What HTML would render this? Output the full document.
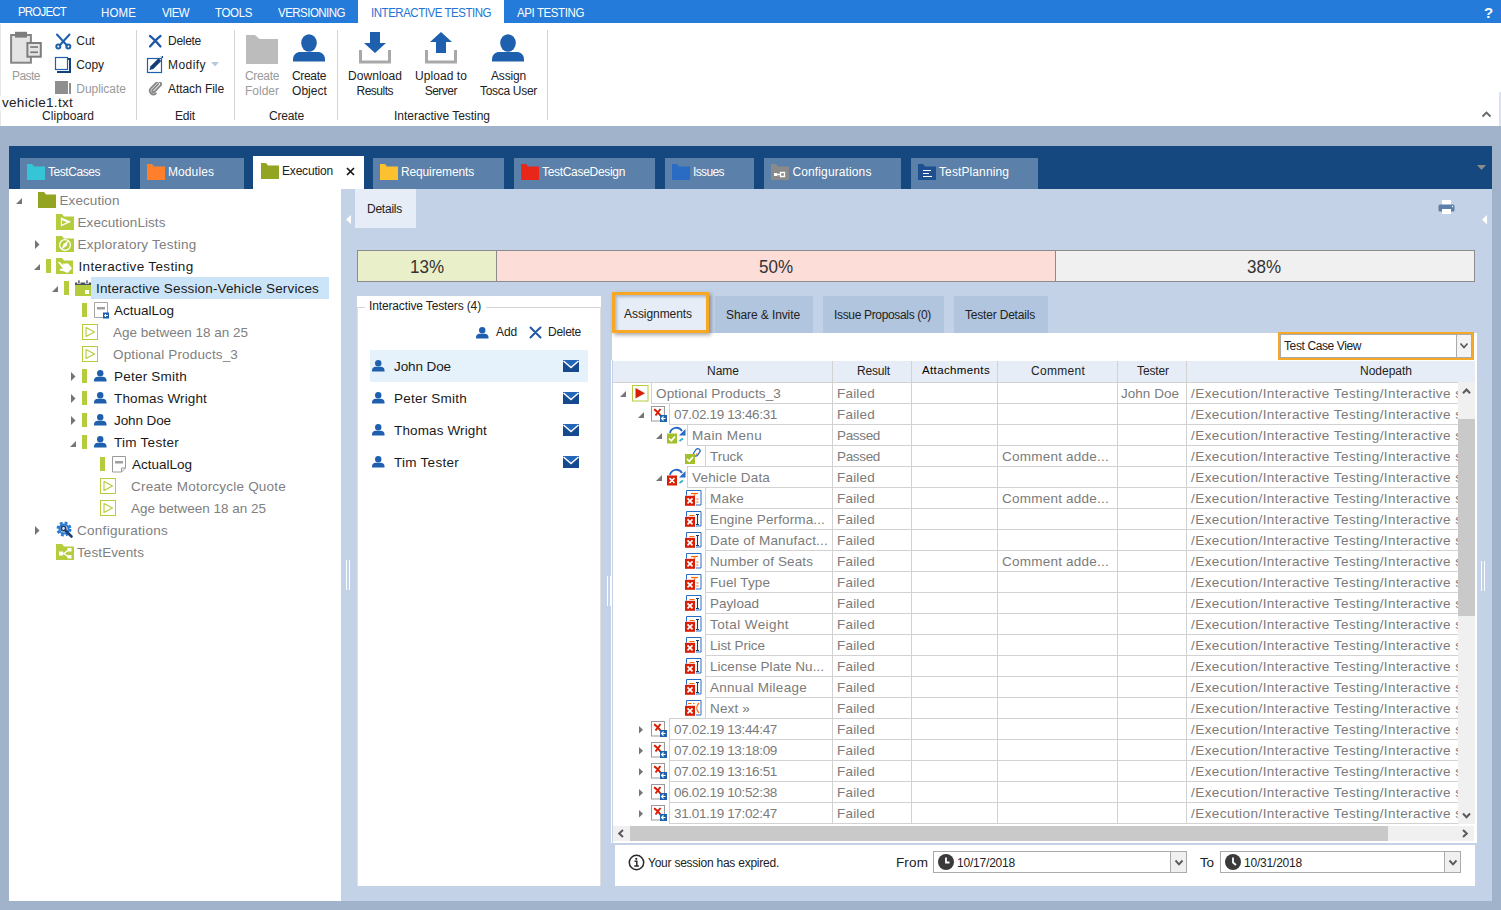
<!DOCTYPE html>
<html lang="en"><head><meta charset="utf-8"><title>Tosca Commander - Interactive Testing</title>
<style>
html,body{margin:0;padding:0}
body{width:1501px;height:910px;overflow:hidden;background:#a0b3cb;position:relative;font-family:"Liberation Sans",sans-serif;-webkit-font-smoothing:antialiased}
.r{position:absolute;display:block;box-sizing:border-box}
.t{position:absolute;white-space:nowrap;display:block}
</style></head>
<body>
<div class="r" style="left:0px;top:0px;width:1501px;height:23px;background:#257bd9;"></div>
<div class="r" style="left:358px;top:0px;width:146px;height:24px;background:#fff;"></div>
<span class="t" style="left:18px;top:4px;font-size:11.5px;line-height:16px;color:#fff;letter-spacing:-0.810px;transform:scaleY(1.1);">PROJECT</span>
<span class="t" style="left:101px;top:4.8px;font-size:11.5px;line-height:16px;color:#fff;letter-spacing:0.125px;transform:scaleY(1.1);">HOME</span>
<span class="t" style="left:162px;top:4.8px;font-size:11.5px;line-height:16px;color:#fff;letter-spacing:-0.598px;transform:scaleY(1.1);">VIEW</span>
<span class="t" style="left:215px;top:4.8px;font-size:11.5px;line-height:16px;color:#fff;letter-spacing:-0.355px;transform:scaleY(1.1);">TOOLS</span>
<span class="t" style="left:278px;top:4.8px;font-size:11.5px;line-height:16px;color:#fff;letter-spacing:-0.521px;transform:scaleY(1.1);">VERSIONING</span>
<span class="t" style="left:371px;top:4.8px;font-size:11.5px;line-height:16px;color:#2474d3;letter-spacing:-0.466px;transform:scaleY(1.1);">INTERACTIVE TESTING</span>
<span class="t" style="left:517px;top:4.8px;font-size:11.5px;line-height:16px;color:#fff;letter-spacing:-0.396px;transform:scaleY(1.1);">API TESTING</span>
<span class="t" style="left:1484px;top:4.5px;font-size:15px;line-height:16px;color:#fff;font-weight:700;">?</span>
<div class="r" style="left:0px;top:23px;width:1501px;height:103px;background:#fff;"></div>
<div class="r" style="left:0px;top:24px;width:1px;height:102px;background:#e6e6e6;"></div>
<div class="r" style="left:1499px;top:92px;width:2px;height:34px;background:#dde3ec;"></div>
<div class="r" style="left:136px;top:30px;width:1px;height:90px;background:#d4d4d4;"></div>
<div class="r" style="left:234px;top:30px;width:1px;height:90px;background:#d4d4d4;"></div>
<div class="r" style="left:337px;top:30px;width:1px;height:90px;background:#d4d4d4;"></div>
<div class="r" style="left:547px;top:30px;width:1px;height:90px;background:#d4d4d4;"></div>
<svg class="r" style="left:10px;top:31px;" width="33" height="34" viewBox="0 0 33 34"><rect x="1.100" y="4" width="19.800" height="27.700" fill="#e4e4e4" stroke="#858585" stroke-width="2"/>
<rect x="5" y=".8" width="12" height="5.800" fill="#7d7d7d"/>
<rect x="17.400" y="12" width="13.400" height="13.700" fill="#e4e4e4" stroke="#7d7d7d" stroke-width="2"/>
<rect x="20.200" y="15.200" width="7.800" height="1.700" fill="#7d7d7d"/><rect x="20.200" y="20.400" width="7.800" height="1.700" fill="#7d7d7d"/></svg>
<span class="t" style="left:12px;top:68px;font-size:12px;line-height:16px;color:#9a9a9a;letter-spacing:-0.537px;">Paste</span>
<svg class="r" style="left:54px;top:32px;" width="18" height="18" viewBox="0 0 18 18"><g fill="none" stroke="#1e5fae" stroke-width="2" stroke-linecap="round"><path d="M3 2.500l10 11M15.500 2.500L6 13"/><circle cx="4.300" cy="14.500" r="2"/><circle cx="14.300" cy="14.500" r="2"/></g></svg>
<span class="t" style="left:76.3px;top:33px;font-size:12px;line-height:16px;color:#222;letter-spacing:-0.058px;">Cut</span>
<svg class="r" style="left:54px;top:56px;" width="18" height="18" viewBox="0 0 18 18"><path d="M4 3h12v13h-13" fill="none" stroke="#123f7a" stroke-width="2"/><rect x="1.500" y="1.500" width="12" height="12" fill="#fff" stroke="#1e5fae" stroke-width="1.200"/></svg>
<span class="t" style="left:76.3px;top:57px;font-size:12px;line-height:16px;color:#222;letter-spacing:-0.128px;">Copy</span>
<svg class="r" style="left:54px;top:80px;" width="18" height="18" viewBox="0 0 18 18"><rect x="1" y="1" width="13" height="13" fill="#8f8f8f"/><rect x="15" y="3" width="2" height="11" fill="#8f8f8f"/></svg>
<span class="t" style="left:76.3px;top:81px;font-size:12px;line-height:16px;color:#9a9a9a;letter-spacing:-0.059px;">Duplicate</span>
<div class="r" style="left:0px;top:96px;width:55px;height:15px;background:#fbfbfb;"></div>
<span class="t" style="left:2px;top:95px;font-size:13.5px;line-height:16px;color:#222;letter-spacing:0.289px;">vehicle1.txt</span>
<span class="t" style="left:42px;top:108px;font-size:12px;line-height:16px;color:#222;letter-spacing:0.071px;">Clipboard</span>
<svg class="r" style="left:147px;top:33px;" width="16" height="16" viewBox="0 0 16 16"><path d="M3 3C6.500 5.500 10 9.500 13.500 13.500M13.500 3C10 5.500 6.500 9.500 3 13.500" fill="none" stroke="#1e57a4" stroke-width="2.200" stroke-linecap="round"/></svg>
<span class="t" style="left:168px;top:33px;font-size:12px;line-height:16px;color:#222;letter-spacing:-0.281px;">Delete</span>
<svg class="r" style="left:146px;top:55px;" width="18" height="19" viewBox="0 0 18 19"><rect x="1.500" y="3.500" width="14" height="14" fill="#fff" stroke="#1e5fae" stroke-width="1.200"/><path d="M3.500 15l1-3.800 8-8 2.800 2.800-8 8z" fill="#123f7a"/><path d="M15 1.500l1.500 1.500M16.500 1v2" stroke="#123f7a" stroke-width="1"/></svg>
<span class="t" style="left:168px;top:57px;font-size:12px;line-height:16px;color:#222;letter-spacing:0.443px;">Modify</span>
<svg class="r" style="left:211px;top:62px;" width="8" height="5" viewBox="0 0 8 5"><path d="M0 0h8l-4 4.500z" fill="#b7c9e0"/></svg>
<svg class="r" style="left:148px;top:82px;" width="14" height="14" viewBox="0 0 17 17"><path d="M12.500 4.500l-7 7a1.600 1.600 0 0 0 2.300 2.300l7-7a3 3 0 0 0-4.300-4.300l-7.200 7.200a4.400 4.400 0 0 0 6.200 6.200" fill="none" stroke="#888" stroke-width="2.300" stroke-linecap="round" transform="translate(0,-2)"/></svg>
<span class="t" style="left:168px;top:81px;font-size:12px;line-height:16px;color:#222;letter-spacing:-0.063px;">Attach File</span>
<span class="t" style="left:175px;top:108px;font-size:12px;line-height:16px;color:#222;letter-spacing:-0.169px;">Edit</span>
<svg class="r" style="left:246px;top:35px;" width="33" height="29" viewBox="0 0 33 29"><path d="M0 0h9l4.500 4h18.500v25h-32z" fill="#bcbcbc"/></svg>
<span class="t" style="left:245px;top:68px;font-size:12px;line-height:16px;color:#9a9a9a;letter-spacing:-0.336px;">Create</span>
<span class="t" style="left:245px;top:83px;font-size:12px;line-height:16px;color:#9a9a9a;letter-spacing:-0.002px;">Folder</span>
<svg class="r" style="left:293px;top:34px;" width="32" height="28" viewBox="0 0 32 28"><ellipse cx="16" cy="9" rx="7.800" ry="8.800" fill="#1e5fae"/><path d="M0 27.500v-2c0-5 3.500-7.500 7.500-7.500h17c4 0 7.500 2.500 7.500 7.500v2z" fill="#1e5fae"/></svg>
<span class="t" style="left:292px;top:68px;font-size:12px;line-height:16px;color:#222;letter-spacing:-0.336px;">Create</span>
<span class="t" style="left:292px;top:83px;font-size:12px;line-height:16px;color:#222;letter-spacing:0.053px;">Object</span>
<span class="t" style="left:269px;top:108px;font-size:12px;line-height:16px;color:#222;letter-spacing:-0.170px;">Create</span>
<svg class="r" style="left:358px;top:32px;" width="34" height="32" viewBox="0 0 34 32"><path d="M12 0h10v11h6l-11 10-11-10h6z" fill="#1e5fae"/><path d="M2.500 18v12h29v-12" fill="none" stroke="#a9a9a9" stroke-width="3"/></svg>
<span class="t" style="left:348px;top:68px;font-size:12px;line-height:16px;color:#222;letter-spacing:0.079px;">Download</span>
<span class="t" style="left:356.5px;top:83px;font-size:12px;line-height:16px;color:#222;letter-spacing:-0.502px;">Results</span>
<svg class="r" style="left:424px;top:32px;" width="34" height="32" viewBox="0 0 34 32"><path d="M12 21h10v-11h6l-11-10-11 10h6z" fill="#1e5fae"/><path d="M2.500 18v12h29v-12" fill="none" stroke="#a9a9a9" stroke-width="3"/></svg>
<span class="t" style="left:415px;top:68px;font-size:12px;line-height:16px;color:#222;letter-spacing:0.070px;">Upload to</span>
<span class="t" style="left:424.7px;top:83px;font-size:12px;line-height:16px;color:#222;letter-spacing:-0.507px;">Server</span>
<svg class="r" style="left:492px;top:34px;" width="32" height="28" viewBox="0 0 32 28"><ellipse cx="16" cy="9" rx="7.800" ry="8.800" fill="#1e5fae"/><path d="M0 27.500v-2c0-5 3.500-7.500 7.500-7.500h17c4 0 7.500 2.500 7.500 7.500v2z" fill="#1e5fae"/></svg>
<span class="t" style="left:491px;top:68px;font-size:12px;line-height:16px;color:#222;letter-spacing:-0.170px;">Assign</span>
<span class="t" style="left:480px;top:83px;font-size:12px;line-height:16px;color:#222;letter-spacing:-0.302px;">Tosca User</span>
<span class="t" style="left:394px;top:108px;font-size:12px;line-height:16px;color:#222;letter-spacing:-0.026px;">Interactive Testing</span>
<svg class="r" style="left:1481px;top:110px;" width="11" height="8" viewBox="0 0 11 8"><path d="M1.500 6.500l4-4 4 4" fill="none" stroke="#666" stroke-width="1.800"/></svg>
<div class="r" style="left:9px;top:146px;width:1483px;height:43px;background:#14487f;"></div>
<div class="r" style="left:20px;top:158px;width:110px;height:31px;background:#5b80a9;"></div>
<span class="t" style="left:48px;top:164px;font-size:12px;line-height:16px;color:#fff;letter-spacing:-0.447px;">TestCases</span>
<svg class="r" style="left:27px;top:164px;" width="18" height="16" viewBox="0 0 18 16"><path d="M0 0h5l2 2.500h11v13.500h-18z" fill="#36c5d6"/></svg>
<div class="r" style="left:140px;top:158px;width:104px;height:31px;background:#5b80a9;"></div>
<span class="t" style="left:168px;top:164px;font-size:12px;line-height:16px;color:#fff;letter-spacing:0.092px;">Modules</span>
<svg class="r" style="left:147px;top:164px;" width="18" height="16" viewBox="0 0 18 16"><path d="M0 0h5l2 2.500h11v13.500h-18z" fill="#ff7f2a"/></svg>
<div class="r" style="left:253px;top:156px;width:111px;height:33px;background:#fff;"></div>
<svg class="r" style="left:261px;top:163px;" width="18" height="16" viewBox="0 0 18 16"><path d="M0 0h5l2 2.500h11v13.500h-18z" fill="#93a322"/></svg>
<span class="t" style="left:282px;top:163px;font-size:12px;line-height:16px;color:#222;letter-spacing:-0.189px;">Execution</span>
<svg class="r" style="left:346px;top:167px;" width="9" height="9" viewBox="0 0 9 9"><path d="M1 1l7 7M8 1l-7 7" stroke="#111" stroke-width="1.600" fill="none"/></svg>
<div class="r" style="left:373px;top:158px;width:131px;height:31px;background:#5b80a9;"></div>
<span class="t" style="left:401px;top:164px;font-size:12px;line-height:16px;color:#fff;letter-spacing:-0.142px;">Requirements</span>
<svg class="r" style="left:380px;top:164px;" width="18" height="16" viewBox="0 0 18 16"><path d="M0 0h5l2 2.500h11v13.500h-18z" fill="#fdc02f"/></svg>
<div class="r" style="left:514px;top:158px;width:141px;height:31px;background:#5b80a9;"></div>
<span class="t" style="left:542px;top:164px;font-size:12px;line-height:16px;color:#fff;letter-spacing:-0.312px;">TestCaseDesign</span>
<svg class="r" style="left:521px;top:164px;" width="18" height="16" viewBox="0 0 18 16"><path d="M0 0h5l2 2.500h11v13.500h-18z" fill="#e8261a"/></svg>
<div class="r" style="left:665px;top:158px;width:89px;height:31px;background:#5b80a9;"></div>
<span class="t" style="left:693px;top:164px;font-size:12px;line-height:16px;color:#fff;letter-spacing:-0.614px;">Issues</span>
<svg class="r" style="left:672px;top:164px;" width="18" height="16" viewBox="0 0 18 16"><path d="M0 0h5l2 2.500h11v13.500h-18z" fill="#2a6cc4"/></svg>
<div class="r" style="left:764px;top:158px;width:137px;height:31px;background:#5b80a9;"></div>
<span class="t" style="left:792.5px;top:164px;font-size:12px;line-height:16px;color:#fff;letter-spacing:0.116px;">Configurations</span>
<svg class="r" style="left:771px;top:164px;" width="18" height="16" viewBox="0 0 18 16"><path d="M0 0h5l2 2.500h11v13.500h-18z" fill="#8a8a8a"/><path d="M4 10.500h5M9.500 8.500h4v4h-4z" fill="none" stroke="#fff" stroke-width="1.300"/><rect x="3" y="9" width="3" height="3" fill="#fff"/></svg>
<div class="r" style="left:911px;top:158px;width:127px;height:31px;background:#5b80a9;"></div>
<span class="t" style="left:939px;top:164px;font-size:12px;line-height:16px;color:#fff;letter-spacing:0.107px;">TestPlanning</span>
<svg class="r" style="left:918px;top:164px;" width="18" height="16" viewBox="0 0 18 16"><path d="M0 0h5l2 2.500h11v13.500h-18z" fill="#1d4f91"/><path d="M5 6.500h8M5 9.500h6M5 12.500h9" stroke="#fff" stroke-width="1"/></svg>
<svg class="r" style="left:1477px;top:165px;" width="10" height="6" viewBox="0 0 10 6"><path d="M0 0h9l-4.500 5z" fill="#8c8c8c"/></svg>
<div class="r" style="left:9px;top:189px;width:332px;height:712px;background:#fff;"></div>
<svg class="r" style="left:16px;top:198px;" width="6" height="6" viewBox="0 0 6 6"><path d="M6 0v6h-6z" fill="#757575"/></svg>
<svg class="r" style="left:38px;top:192px;" width="18" height="16" viewBox="0 0 18 16"><path d="M0 0h6l2 2.500h10v13.500h-18z" fill="#93a322"/></svg>
<span class="t" style="left:59.5px;top:192.8px;font-size:13.5px;line-height:16px;color:#808080;letter-spacing:0.079px;">Execution</span>
<svg class="r" style="left:56px;top:214px;" width="18" height="16" viewBox="0 0 18 16"><path d="M0 0h6l2 2.500h10v13.500h-18z" fill="#b5cc3d"/><path d="M4.800 3.300l10.400 4.500-10.400 4.700z" fill="#fff"/><path d="M6 6.300l5 2-5 2.200z" fill="#b5cc3d"/></svg>
<span class="t" style="left:77.5px;top:214.8px;font-size:13.5px;line-height:16px;color:#808080;letter-spacing:0.068px;">ExecutionLists</span>
<svg class="r" style="left:35px;top:240px;" width="5" height="9" viewBox="0 0 5 9"><path d="M0 0l4.500 4.500-4.500 4.500z" fill="#757575"/></svg>
<svg class="r" style="left:56px;top:236px;" width="18" height="16" viewBox="0 0 18 16"><path d="M0 0h6l2 2.500h10v13.500h-18z" fill="#b5cc3d"/><circle cx="9" cy="9" r="5.400" fill="none" stroke="#fff" stroke-width="1.300"/><path d="M12.500 4.500l-2 5.500-5 3.500 2-5.500z" fill="#fff"/></svg>
<span class="t" style="left:77.5px;top:236.8px;font-size:13.5px;line-height:16px;color:#808080;letter-spacing:0.234px;">Exploratory Testing</span>
<svg class="r" style="left:34px;top:264px;" width="6" height="6" viewBox="0 0 6 6"><path d="M6 0v6h-6z" fill="#757575"/></svg>
<div class="r" style="left:46px;top:259px;width:5px;height:14px;background:#b5cc3d;"></div>
<svg class="r" style="left:56px;top:258px;" width="18" height="16" viewBox="0 0 18 16"><path d="M0 0h6l2 2.500h9v13.500h-17z" fill="#b5cc3d"/><path d="M1.900 4.200L3.400 3.800L7.200 7L7.600 5L9 6L9.800 4.900L11 6L11.800 5L16 10.300L11.700 14.900L6.900 13L3.700 12.500L4 11.100L6.900 10.600Z" fill="#fff"/></svg>
<span class="t" style="left:78.5px;top:258.8px;font-size:13.5px;line-height:16px;color:#1a1a1a;letter-spacing:0.339px;">Interactive Testing</span>
<svg class="r" style="left:52px;top:285.5px;" width="6" height="6" viewBox="0 0 6 6"><path d="M6 0v6h-6z" fill="#757575"/></svg>
<div class="r" style="left:64px;top:281px;width:5px;height:14px;background:#b5cc3d;"></div>
<svg class="r" style="left:75px;top:280px;" width="16" height="16" viewBox="0 0 16 16"><rect x="0" y="5" width="16" height="11" fill="#b5cc3d"/><rect x="0" y="2.500" width="16" height="2.500" fill="#4a525e"/><rect x="2" y="2.300" width="3.700" height="1.400" fill="#fff"/><rect x="10" y="2.300" width="4" height="1.400" fill="#fff"/><rect x="3.200" y=".3" width="1.400" height="2.900" fill="#4a525e"/><rect x="11.300" y=".3" width="1.400" height="2.900" fill="#4a525e"/><rect x="10" y="10" width="4" height="4" fill="#fff"/></svg>
<div class="r" style="left:91px;top:277px;width:238px;height:22px;background:#cce4f7;"></div>
<span class="t" style="left:96px;top:280.8px;font-size:13.5px;line-height:16px;color:#1a1a1a;letter-spacing:0.150px;">Interactive Session-Vehicle Services</span>
<div class="r" style="left:82px;top:303px;width:5px;height:14px;background:#b5cc3d;"></div>
<svg class="r" style="left:93px;top:302px;" width="16" height="17" viewBox="0 0 16 17"><path d="M1.500 .5h13v15h-13z" fill="#fff" stroke="#a5a5a5" stroke-width="1"/><rect x="4" y="5" width="8" height="2.500" fill="#a0a0a0"/><rect x="10" y="10.500" width="6" height="6" fill="#1e5fae"/><path d="M11.500 13.500h3.500M13 12l-1.500 1.500 1.500 1.500" stroke="#fff" stroke-width="1" fill="none"/></svg>
<span class="t" style="left:114px;top:302.8px;font-size:13.5px;line-height:16px;color:#1a1a1a;letter-spacing:-0.005px;">ActualLog</span>
<svg class="r" style="left:82px;top:324px;" width="16" height="16" viewBox="0 0 16 16"><rect x=".5" y=".5" width="15" height="15" fill="#fff" stroke="#b5cc3d" stroke-width="1"/><path d="M4 3.500l8.500 4.500-8.500 4.500z" fill="none" stroke="#b5cc3d" stroke-width="1.100" stroke-linejoin="round"/></svg>
<span class="t" style="left:113px;top:324.8px;font-size:13.5px;line-height:16px;color:#808080;letter-spacing:-0.006px;">Age between 18 an 25</span>
<svg class="r" style="left:82px;top:346px;" width="16" height="16" viewBox="0 0 16 16"><rect x=".5" y=".5" width="15" height="15" fill="#fff" stroke="#b5cc3d" stroke-width="1"/><path d="M4 3.500l8.500 4.500-8.500 4.500z" fill="none" stroke="#b5cc3d" stroke-width="1.100" stroke-linejoin="round"/></svg>
<span class="t" style="left:113px;top:346.8px;font-size:13.5px;line-height:16px;color:#808080;letter-spacing:0.141px;">Optional Products_3</span>
<svg class="r" style="left:71px;top:372px;" width="5" height="9" viewBox="0 0 5 9"><path d="M0 0l4.500 4.500-4.500 4.500z" fill="#757575"/></svg>
<div class="r" style="left:82px;top:369px;width:5px;height:14px;background:#b5cc3d;"></div>
<svg class="r" style="left:94px;top:370px;" width="13" height="12" viewBox="0 0 13 12"><circle cx="6.250" cy="3.300" r="3.200" fill="#1e5fae"/><path d="M0 11.500v-1.200c0-2.300 1.700-3.600 3.700-3.600h5.100c2 0 3.700 1.300 3.700 3.600v1.200z" fill="#1e5fae"/></svg>
<span class="t" style="left:114px;top:368.8px;font-size:13.5px;line-height:16px;color:#1a1a1a;letter-spacing:0.225px;">Peter Smith</span>
<svg class="r" style="left:71px;top:394px;" width="5" height="9" viewBox="0 0 5 9"><path d="M0 0l4.500 4.500-4.500 4.500z" fill="#757575"/></svg>
<div class="r" style="left:82px;top:391px;width:5px;height:14px;background:#b5cc3d;"></div>
<svg class="r" style="left:94px;top:392px;" width="13" height="12" viewBox="0 0 13 12"><circle cx="6.250" cy="3.300" r="3.200" fill="#1e5fae"/><path d="M0 11.500v-1.200c0-2.300 1.700-3.600 3.700-3.600h5.100c2 0 3.700 1.300 3.700 3.600v1.200z" fill="#1e5fae"/></svg>
<span class="t" style="left:114px;top:390.8px;font-size:13.5px;line-height:16px;color:#1a1a1a;letter-spacing:0.133px;">Thomas Wright</span>
<svg class="r" style="left:71px;top:416px;" width="5" height="9" viewBox="0 0 5 9"><path d="M0 0l4.500 4.500-4.500 4.500z" fill="#757575"/></svg>
<div class="r" style="left:82px;top:413px;width:5px;height:14px;background:#b5cc3d;"></div>
<svg class="r" style="left:94px;top:414px;" width="13" height="12" viewBox="0 0 13 12"><circle cx="6.250" cy="3.300" r="3.200" fill="#1e5fae"/><path d="M0 11.500v-1.200c0-2.300 1.700-3.600 3.700-3.600h5.100c2 0 3.700 1.300 3.700 3.600v1.200z" fill="#1e5fae"/></svg>
<span class="t" style="left:114px;top:412.8px;font-size:13.5px;line-height:16px;color:#1a1a1a;letter-spacing:-0.099px;">John Doe</span>
<svg class="r" style="left:70px;top:441px;" width="6" height="6" viewBox="0 0 6 6"><path d="M6 0v6h-6z" fill="#757575"/></svg>
<div class="r" style="left:82px;top:435px;width:5px;height:14px;background:#b5cc3d;"></div>
<svg class="r" style="left:94px;top:436px;" width="13" height="12" viewBox="0 0 13 12"><circle cx="6.250" cy="3.300" r="3.200" fill="#1e5fae"/><path d="M0 11.500v-1.200c0-2.300 1.700-3.600 3.700-3.600h5.100c2 0 3.700 1.300 3.700 3.600v1.200z" fill="#1e5fae"/></svg>
<span class="t" style="left:114px;top:434.8px;font-size:13.5px;line-height:16px;color:#1a1a1a;letter-spacing:0.274px;">Tim Tester</span>
<div class="r" style="left:100px;top:457px;width:5px;height:14px;background:#b5cc3d;"></div>
<svg class="r" style="left:111px;top:456px;" width="16" height="17" viewBox="0 0 16 17"><path d="M1.500 .5h13v11.500l-4 4h-9z" fill="#fff" stroke="#9a9a9a" stroke-width="1"/><rect x="4" y="5" width="8" height="2.500" fill="#a0a0a0"/><path d="M10.500 16v-4h4" fill="none" stroke="#9a9a9a"/></svg>
<span class="t" style="left:132px;top:456.8px;font-size:13.5px;line-height:16px;color:#1a1a1a;letter-spacing:-0.005px;">ActualLog</span>
<svg class="r" style="left:100px;top:478px;" width="16" height="16" viewBox="0 0 16 16"><rect x=".5" y=".5" width="15" height="15" fill="#fff" stroke="#b5cc3d" stroke-width="1"/><path d="M4 3.500l8.500 4.500-8.500 4.500z" fill="none" stroke="#b5cc3d" stroke-width="1.100" stroke-linejoin="round"/></svg>
<span class="t" style="left:131px;top:478.8px;font-size:13.5px;line-height:16px;color:#808080;letter-spacing:0.215px;">Create Motorcycle Quote</span>
<svg class="r" style="left:100px;top:500px;" width="16" height="16" viewBox="0 0 16 16"><rect x=".5" y=".5" width="15" height="15" fill="#fff" stroke="#b5cc3d" stroke-width="1"/><path d="M4 3.500l8.500 4.500-8.500 4.500z" fill="none" stroke="#b5cc3d" stroke-width="1.100" stroke-linejoin="round"/></svg>
<span class="t" style="left:131px;top:500.8px;font-size:13.5px;line-height:16px;color:#808080;letter-spacing:-0.006px;">Age between 18 an 25</span>
<svg class="r" style="left:35px;top:526px;" width="5" height="9" viewBox="0 0 5 9"><path d="M0 0l4.500 4.500-4.500 4.500z" fill="#757575"/></svg>
<svg class="r" style="left:56px;top:521px;" width="18" height="18" viewBox="0 0 18 18"><circle cx="8" cy="8" r="6" fill="none" stroke="#2a7bd1" stroke-width="3" stroke-dasharray="2.700 2"/><circle cx="8" cy="8" r="4.600" fill="#d9e8f8" stroke="#2a7bd1" stroke-width="2"/><circle cx="7.500" cy="7.500" r="2.200" fill="none" stroke="#1c3f73" stroke-width="1.600"/><path d="M9.500 9.500l6 6" stroke="#1c3f73" stroke-width="2.600" stroke-linecap="round"/></svg>
<span class="t" style="left:77px;top:522.8px;font-size:13.5px;line-height:16px;color:#808080;letter-spacing:0.282px;">Configurations</span>
<svg class="r" style="left:56px;top:544px;" width="18" height="16" viewBox="0 0 18 16"><path d="M0 0h6l2 2.500h10v13.500h-18z" fill="#b5cc3d"/><path d="M5 9.500h3M8 9.500l4.500-3.500M8 9.500l4.500 3.500" stroke="#fff" stroke-width="1.300" fill="none"/><rect x="3" y="7.500" width="4" height="4" fill="#fff"/><rect x="11.500" y="4" width="4" height="3.500" fill="#fff"/><rect x="11.500" y="11" width="4" height="3.500" fill="#fff"/></svg>
<span class="t" style="left:77px;top:544.8px;font-size:13.5px;line-height:16px;color:#808080;letter-spacing:0.097px;">TestEvents</span>
<div class="r" style="left:341px;top:189px;width:1151px;height:712px;background:#c3d2e6;"></div>
<div class="r" style="left:355px;top:189px;width:61px;height:39px;background:#e6edf6;"></div>
<span class="t" style="left:367px;top:201px;font-size:12px;line-height:16px;color:#222;letter-spacing:-0.240px;">Details</span>
<svg class="r" style="left:345.5px;top:214.5px;" width="5" height="9" viewBox="0 0 5 9"><path d="M5 0v9l-5-4.500z" fill="#fff"/></svg>
<svg class="r" style="left:1482px;top:214.5px;" width="5" height="9.5" viewBox="0 0 5 9.5"><path d="M5 0v9.500l-5-4.750z" fill="#fff"/></svg>
<svg class="r" style="left:1438px;top:200px;" width="18" height="15" viewBox="0 0 18 15"><rect x="4" y="0" width="9" height="5" fill="#fff"/><rect x="0.500" y="4.500" width="16" height="7" rx="1.500" fill="#5b80a9"/><rect x="4" y="9" width="9" height="5" fill="#fff"/><circle cx="14.500" cy="6.500" r=".7" fill="#fff"/></svg>
<div class="r" style="left:357px;top:250px;width:1118px;height:32px;background:#f0f0f0;border:1px solid #8c8c8c;"></div>
<div class="r" style="left:358px;top:251px;width:138px;height:30px;background:#e9f0c9;"></div>
<div class="r" style="left:496px;top:251px;width:560px;height:30px;background:#fdddd8;border-left:1px solid #8c8c8c;border-right:1px solid #8c8c8c;"></div>
<span class="t" style="left:410px;top:257px;font-size:17px;line-height:20px;color:#333;letter-spacing:-0.009px;transform:scaleY(1.13);transform-origin:50% 50%;">13%</span>
<span class="t" style="left:759px;top:257px;font-size:17px;line-height:20px;color:#333;letter-spacing:-0.009px;transform:scaleY(1.13);transform-origin:50% 50%;">50%</span>
<span class="t" style="left:1247px;top:257px;font-size:17px;line-height:20px;color:#333;letter-spacing:-0.009px;transform:scaleY(1.13);transform-origin:50% 50%;">38%</span>
<div class="r" style="left:357px;top:296px;width:244px;height:590px;background:#fff;"></div>
<div class="r" style="left:357px;top:307px;width:244px;height:1px;background:#d4d4d4;"></div>
<div class="r" style="left:357px;top:307px;width:1px;height:579px;background:#e0e0e0;"></div>
<div class="r" style="left:600px;top:307px;width:1px;height:579px;background:#e0e0e0;"></div>
<div class="r" style="left:365px;top:300px;width:121px;height:12px;background:#fff;"></div>
<span class="t" style="left:369px;top:298px;font-size:12px;line-height:16px;color:#222;letter-spacing:-0.137px;">Interactive Testers (4)</span>
<svg class="r" style="left:476px;top:326.5px;" width="13" height="12" viewBox="0 0 13 12"><circle cx="6.250" cy="3.300" r="3.200" fill="#1e5fae"/><path d="M0 11.500v-1.200c0-2.300 1.700-3.600 3.700-3.600h5.100c2 0 3.700 1.300 3.700 3.600v1.200z" fill="#1e5fae"/></svg>
<span class="t" style="left:496px;top:324px;font-size:12px;line-height:16px;color:#222;letter-spacing:-0.117px;">Add</span>
<svg class="r" style="left:529px;top:326px;" width="13" height="13" viewBox="0 0 13 13"><path d="M1.500 1.500C5 5 8 8 11.500 11.500M11.500 1.500C8 4.500 5 8 1.500 11.500" fill="none" stroke="#1e57a4" stroke-width="2" stroke-linecap="round"/></svg>
<span class="t" style="left:548px;top:324px;font-size:12px;line-height:16px;color:#222;letter-spacing:-0.281px;">Delete</span>
<div class="r" style="left:370px;top:350px;width:218px;height:32px;background:#e5f1fb;"></div>
<svg class="r" style="left:372px;top:360px;" width="13" height="12" viewBox="0 0 13 12"><circle cx="6.250" cy="3.300" r="3.200" fill="#1e5fae"/><path d="M0 11.500v-1.200c0-2.300 1.700-3.600 3.700-3.600h5.100c2 0 3.700 1.300 3.700 3.600v1.200z" fill="#1e5fae"/></svg>
<span class="t" style="left:394px;top:358.5px;font-size:13.5px;line-height:16px;color:#1a1a1a;letter-spacing:-0.099px;">John Doe</span>
<svg class="r" style="left:563px;top:360px;" width="16" height="12" viewBox="0 0 16 12"><rect x="0" y="0" width="16" height="12" fill="#174a8c"/><path d="M0 0h16l-8 7z" fill="#2466b8"/><path d="M.5 1l7.500 6.500 7.500-6.500" fill="none" stroke="#fff" stroke-width="1.500"/></svg>
<svg class="r" style="left:372px;top:392px;" width="13" height="12" viewBox="0 0 13 12"><circle cx="6.250" cy="3.300" r="3.200" fill="#1e5fae"/><path d="M0 11.500v-1.200c0-2.300 1.700-3.600 3.700-3.600h5.100c2 0 3.700 1.300 3.700 3.600v1.200z" fill="#1e5fae"/></svg>
<span class="t" style="left:394px;top:390.5px;font-size:13.5px;line-height:16px;color:#1a1a1a;letter-spacing:0.225px;">Peter Smith</span>
<svg class="r" style="left:563px;top:392px;" width="16" height="12" viewBox="0 0 16 12"><rect x="0" y="0" width="16" height="12" fill="#174a8c"/><path d="M0 0h16l-8 7z" fill="#2466b8"/><path d="M.5 1l7.500 6.500 7.500-6.500" fill="none" stroke="#fff" stroke-width="1.500"/></svg>
<svg class="r" style="left:372px;top:424px;" width="13" height="12" viewBox="0 0 13 12"><circle cx="6.250" cy="3.300" r="3.200" fill="#1e5fae"/><path d="M0 11.500v-1.200c0-2.300 1.700-3.600 3.700-3.600h5.100c2 0 3.700 1.300 3.700 3.600v1.200z" fill="#1e5fae"/></svg>
<span class="t" style="left:394px;top:422.5px;font-size:13.5px;line-height:16px;color:#1a1a1a;letter-spacing:0.133px;">Thomas Wright</span>
<svg class="r" style="left:563px;top:424px;" width="16" height="12" viewBox="0 0 16 12"><rect x="0" y="0" width="16" height="12" fill="#174a8c"/><path d="M0 0h16l-8 7z" fill="#2466b8"/><path d="M.5 1l7.500 6.500 7.500-6.500" fill="none" stroke="#fff" stroke-width="1.500"/></svg>
<svg class="r" style="left:372px;top:456px;" width="13" height="12" viewBox="0 0 13 12"><circle cx="6.250" cy="3.300" r="3.200" fill="#1e5fae"/><path d="M0 11.500v-1.200c0-2.300 1.700-3.600 3.700-3.600h5.100c2 0 3.700 1.300 3.700 3.600v1.200z" fill="#1e5fae"/></svg>
<span class="t" style="left:394px;top:454.5px;font-size:13.5px;line-height:16px;color:#1a1a1a;letter-spacing:0.274px;">Tim Tester</span>
<svg class="r" style="left:563px;top:456px;" width="16" height="12" viewBox="0 0 16 12"><rect x="0" y="0" width="16" height="12" fill="#174a8c"/><path d="M0 0h16l-8 7z" fill="#2466b8"/><path d="M.5 1l7.500 6.500 7.500-6.500" fill="none" stroke="#fff" stroke-width="1.500"/></svg>
<div class="r" style="left:346px;top:560px;width:1px;height:30px;background:#fff;"></div>
<div class="r" style="left:349px;top:560px;width:1px;height:30px;background:#fff;"></div>
<div class="r" style="left:607px;top:576px;width:1px;height:30px;background:#fff;"></div>
<div class="r" style="left:610px;top:576px;width:1px;height:30px;background:#fff;"></div>
<div class="r" style="left:1481px;top:561px;width:1px;height:30px;background:#fff;"></div>
<div class="r" style="left:1484px;top:561px;width:1px;height:30px;background:#fff;"></div>
<div class="r" style="left:715px;top:296px;width:98px;height:37px;background:#b1c5df;"></div>
<span class="t" style="left:726px;top:307px;font-size:12px;line-height:16px;color:#222;letter-spacing:-0.098px;">Share &amp; Invite</span>
<div class="r" style="left:823px;top:296px;width:121px;height:37px;background:#b1c5df;"></div>
<span class="t" style="left:834px;top:307px;font-size:12px;line-height:16px;color:#222;letter-spacing:-0.336px;">Issue Proposals (0)</span>
<div class="r" style="left:954px;top:296px;width:94px;height:37px;background:#b1c5df;"></div>
<span class="t" style="left:965px;top:307px;font-size:12px;line-height:16px;color:#222;letter-spacing:-0.192px;">Tester Details</span>
<div class="r" style="left:612px;top:333px;width:865px;height:510px;background:#fff;"></div>
<div class="r" style="left:615px;top:845px;width:860px;height:41px;background:#fff;"></div>
<div class="r" style="left:1278px;top:332px;width:196px;height:28px;background:#fff;border:2px solid #f5a828;"></div>
<div class="r" style="left:1280px;top:334px;width:192px;height:24px;background:#fff;border:1px solid #ababab;"></div>
<div class="r" style="left:1456px;top:335px;width:1px;height:22px;background:#ababab;"></div>
<div class="r" style="left:1457px;top:335px;width:14px;height:22px;background:#f3f3f3;"></div>
<svg class="r" style="left:1459px;top:342px;" width="10" height="8" viewBox="0 0 10 8"><path d="M1.500 1.500l3.500 4 3.500-4" fill="none" stroke="#555" stroke-width="1.600"/></svg>
<span class="t" style="left:1284px;top:338px;font-size:12px;line-height:16px;color:#222;letter-spacing:-0.392px;">Test Case View</span>
<div class="r" style="left:613px;top:361px;width:845px;height:21px;background:#e6edf6;"></div>
<div class="r" style="left:1458px;top:361px;width:17px;height:21px;background:#e6edf6;"></div>
<div class="r" style="left:611px;top:360px;width:1px;height:483px;background:#fff;"></div>
<div class="r" style="left:612px;top:360px;width:1px;height:483px;background:#c3d2e6;"></div>
<div class="r" style="left:832px;top:361px;width:1px;height:463px;background:#d2d2d2;"></div>
<div class="r" style="left:911px;top:361px;width:1px;height:463px;background:#d2d2d2;"></div>
<div class="r" style="left:997px;top:361px;width:1px;height:463px;background:#d2d2d2;"></div>
<div class="r" style="left:1117px;top:361px;width:1px;height:463px;background:#d2d2d2;"></div>
<div class="r" style="left:1186px;top:361px;width:1px;height:463px;background:#d2d2d2;"></div>
<div class="r" style="left:613px;top:382px;width:862px;height:1px;background:#d2d2d2;"></div>
<span class="t" style="left:707px;top:363px;font-size:12px;line-height:16px;color:#222;letter-spacing:-0.002px;">Name</span>
<span class="t" style="left:857px;top:363px;font-size:12px;line-height:16px;color:#222;letter-spacing:-0.169px;">Result</span>
<span class="t" style="left:922px;top:362px;font-size:11.5px;line-height:16px;color:#000;letter-spacing:0.371px;">Attachments</span>
<span class="t" style="left:1031px;top:363px;font-size:12px;line-height:16px;color:#222;letter-spacing:0.284px;">Comment</span>
<span class="t" style="left:1137px;top:363px;font-size:12px;line-height:16px;color:#222;letter-spacing:-0.113px;">Tester</span>
<span class="t" style="left:1360px;top:363px;font-size:12px;line-height:16px;color:#222;letter-spacing:-0.005px;">Nodepath</span>
<div class="r" style="left:832px;top:403px;width:626px;height:1px;background:#d2d2d2;"></div>
<div class="r" style="left:651px;top:382px;width:181px;height:22px;background:transparent;border:1px solid #d2d2d2;border-right:none;"></div>
<svg class="r" style="left:620px;top:390.5px;" width="6" height="6" viewBox="0 0 6 6"><path d="M6 0v6h-6z" fill="#757575"/></svg>
<svg class="r" style="left:632px;top:385px;" width="17" height="17" viewBox="0 0 17 17"><rect x=".5" y=".5" width="15.500" height="15.500" fill="#fff" stroke="#b5cc3d" stroke-width="1"/><path d="M3.500 3l9.500 5.300-9.500 5.300z" fill="#d81e05"/></svg>
<span class="t" style="left:656px;top:385.5px;font-size:13.5px;line-height:16px;color:#7b7b7b;letter-spacing:0.141px;">Optional Products_3</span>
<span class="t" style="left:837px;top:385.5px;font-size:13.5px;line-height:16px;color:#7b7b7b;letter-spacing:0.205px;">Failed</span>
<span class="t" style="left:1121px;top:385.5px;font-size:13.5px;line-height:16px;color:#7b7b7b;letter-spacing:0.026px;">John Doe</span>
<div class="r" style="left:1188px;top:382px;width:270px;height:21px;overflow:hidden"><span class="t" style="left:3px;top:4px;font-size:13.5px;line-height:16px;color:#7b7b7b;letter-spacing:0.443px">/Execution/Interactive Testing/Interactive session</span></div>
<div class="r" style="left:832px;top:424px;width:626px;height:1px;background:#d2d2d2;"></div>
<div class="r" style="left:669px;top:403px;width:163px;height:22px;background:transparent;border:1px solid #d2d2d2;border-right:none;"></div>
<svg class="r" style="left:638px;top:411.5px;" width="6" height="6" viewBox="0 0 6 6"><path d="M6 0v6h-6z" fill="#757575"/></svg>
<svg class="r" style="left:651px;top:406px;" width="17" height="17" viewBox="0 0 17 17"><rect x=".5" y=".5" width="13" height="14.500" fill="#fff" stroke="#9a9a9a"/><path d="M3 3.500c2 .5 4 3 6.500 6M9.500 3l-5 6.500" stroke="#d81e05" stroke-width="2" fill="none"/><rect x="9" y="9" width="7" height="7" fill="#1e5fae"/><path d="M10.500 12.500h4M12.500 10.500l-2 2 2 2" stroke="#fff" stroke-width="1.100" fill="none"/></svg>
<span class="t" style="left:674px;top:406.5px;font-size:13.5px;line-height:16px;color:#7b7b7b;letter-spacing:-0.344px;">07.02.19 13:46:31</span>
<span class="t" style="left:837px;top:406.5px;font-size:13.5px;line-height:16px;color:#7b7b7b;letter-spacing:0.205px;">Failed</span>
<div class="r" style="left:1188px;top:403px;width:270px;height:21px;overflow:hidden"><span class="t" style="left:3px;top:4px;font-size:13.5px;line-height:16px;color:#7b7b7b;letter-spacing:0.443px">/Execution/Interactive Testing/Interactive session</span></div>
<div class="r" style="left:832px;top:445px;width:626px;height:1px;background:#d2d2d2;"></div>
<div class="r" style="left:687px;top:424px;width:145px;height:22px;background:transparent;border:1px solid #d2d2d2;border-right:none;"></div>
<svg class="r" style="left:656px;top:432.5px;" width="6" height="6" viewBox="0 0 6 6"><path d="M6 0v6h-6z" fill="#757575"/></svg>
<svg class="r" style="left:667px;top:426px;" width="19" height="19" viewBox="0 0 19 19"><path d="M3 7a6.500 6.500 0 0 1 12-2" fill="none" stroke="#2a6cc4" stroke-width="1.800"/><path d="M18.500 3v6.500h-6.500z" fill="#2a6cc4"/><path d="M12.500 15l3.500-2.500" stroke="#2bb7c4" stroke-width="1.800"/><rect x="0" y="7.5" width="10" height="10" fill="#a3c02c"/><path d="M2 12.5l2.300 2.300 3.700-4.300" stroke="#fff" stroke-width="1.700" fill="none"/></svg>
<span class="t" style="left:692px;top:427.5px;font-size:13.5px;line-height:16px;color:#7b7b7b;letter-spacing:0.358px;">Main Menu</span>
<span class="t" style="left:837px;top:427.5px;font-size:13.5px;line-height:16px;color:#7b7b7b;letter-spacing:-0.338px;">Passed</span>
<div class="r" style="left:1188px;top:424px;width:270px;height:21px;overflow:hidden"><span class="t" style="left:3px;top:4px;font-size:13.5px;line-height:16px;color:#7b7b7b;letter-spacing:0.443px">/Execution/Interactive Testing/Interactive session</span></div>
<div class="r" style="left:832px;top:466px;width:626px;height:1px;background:#d2d2d2;"></div>
<div class="r" style="left:705px;top:445px;width:127px;height:22px;background:transparent;border:1px solid #d2d2d2;border-right:none;"></div>
<svg class="r" style="left:685px;top:447px;" width="18" height="18" viewBox="0 0 18 18"><rect x="9.500" y="1.500" width="4.500" height="8" rx="2.250" fill="none" stroke="#2a6cc4" stroke-width="1.300" transform="rotate(35 12 5.500)"/><circle cx="11.500" cy="7" r=".8" fill="#f60"/><rect x="0" y="7" width="10" height="10" fill="#a3c02c"/><path d="M2 12l2.300 2.300 3.700-4.300" stroke="#fff" stroke-width="1.700" fill="none"/></svg>
<span class="t" style="left:710px;top:448.5px;font-size:13.5px;line-height:16px;color:#7b7b7b;letter-spacing:-0.050px;">Truck</span>
<span class="t" style="left:837px;top:448.5px;font-size:13.5px;line-height:16px;color:#7b7b7b;letter-spacing:-0.338px;">Passed</span>
<span class="t" style="left:1002px;top:448.5px;font-size:13.5px;line-height:16px;color:#7b7b7b;letter-spacing:0.230px;">Comment adde...</span>
<div class="r" style="left:1188px;top:445px;width:270px;height:21px;overflow:hidden"><span class="t" style="left:3px;top:4px;font-size:13.5px;line-height:16px;color:#7b7b7b;letter-spacing:0.443px">/Execution/Interactive Testing/Interactive session</span></div>
<div class="r" style="left:832px;top:487px;width:626px;height:1px;background:#d2d2d2;"></div>
<div class="r" style="left:687px;top:466px;width:145px;height:22px;background:transparent;border:1px solid #d2d2d2;border-right:none;"></div>
<svg class="r" style="left:656px;top:474.5px;" width="6" height="6" viewBox="0 0 6 6"><path d="M6 0v6h-6z" fill="#757575"/></svg>
<svg class="r" style="left:667px;top:468px;" width="19" height="19" viewBox="0 0 19 19"><path d="M3 7a6.500 6.500 0 0 1 12-2" fill="none" stroke="#2a6cc4" stroke-width="1.800"/><path d="M18.500 3v6.500h-6.500z" fill="#2a6cc4"/><path d="M12.500 15l3.500-2.500" stroke="#2bb7c4" stroke-width="1.800"/><rect x="0" y="7.5" width="10" height="10" fill="#d81e05"/><path d="M2.5 10l5 5M7.5 10l-5 5" stroke="#fff" stroke-width="1.700"/></svg>
<span class="t" style="left:692px;top:469.5px;font-size:13.5px;line-height:16px;color:#7b7b7b;letter-spacing:0.184px;">Vehicle Data</span>
<span class="t" style="left:837px;top:469.5px;font-size:13.5px;line-height:16px;color:#7b7b7b;letter-spacing:0.205px;">Failed</span>
<div class="r" style="left:1188px;top:466px;width:270px;height:21px;overflow:hidden"><span class="t" style="left:3px;top:4px;font-size:13.5px;line-height:16px;color:#7b7b7b;letter-spacing:0.443px">/Execution/Interactive Testing/Interactive session</span></div>
<div class="r" style="left:832px;top:508px;width:626px;height:1px;background:#d2d2d2;"></div>
<div class="r" style="left:705px;top:487px;width:127px;height:22px;background:transparent;border:1px solid #d2d2d2;border-right:none;"></div>
<svg class="r" style="left:685px;top:490px;" width="18" height="18" viewBox="0 0 18 18"><path d="M1.500 5.500v-5h14.500v14.500h-5" fill="none" stroke="#2a6cc4" stroke-width="1"/><path d="M6 3.500h7" stroke="#f60" stroke-width="1.200"/><path d="M8 4.500h3l-1.500 1.500z" fill="#f60"/><path d="M11.500 9h2M11.500 12h2" stroke="#f60" stroke-width="1.200"/><rect x="0" y="5.8" width="10" height="10" fill="#d81e05"/><path d="M2.5 8.3l5 5M7.5 8.3l-5 5" stroke="#fff" stroke-width="1.700"/></svg>
<span class="t" style="left:710px;top:490.5px;font-size:13.5px;line-height:16px;color:#7b7b7b;letter-spacing:0.247px;">Make</span>
<span class="t" style="left:837px;top:490.5px;font-size:13.5px;line-height:16px;color:#7b7b7b;letter-spacing:0.205px;">Failed</span>
<span class="t" style="left:1002px;top:490.5px;font-size:13.5px;line-height:16px;color:#7b7b7b;letter-spacing:0.230px;">Comment adde...</span>
<div class="r" style="left:1188px;top:487px;width:270px;height:21px;overflow:hidden"><span class="t" style="left:3px;top:4px;font-size:13.5px;line-height:16px;color:#7b7b7b;letter-spacing:0.443px">/Execution/Interactive Testing/Interactive session</span></div>
<div class="r" style="left:832px;top:529px;width:626px;height:1px;background:#d2d2d2;"></div>
<div class="r" style="left:705px;top:508px;width:127px;height:22px;background:transparent;border:1px solid #d2d2d2;border-right:none;"></div>
<svg class="r" style="left:685px;top:511px;" width="18" height="18" viewBox="0 0 18 18"><path d="M1.500 5.500v-5h14.500v14.500h-5" fill="none" stroke="#2a6cc4" stroke-width="1"/><path d="M4.500 4.500h5" stroke="#f60" stroke-width="1"/><path d="M11 3.500h3M12.500 3.500v10M11 13.500h3" stroke="#0f3d78" stroke-width="1.100" fill="none"/><rect x="0" y="5.8" width="10" height="10" fill="#d81e05"/><path d="M2.5 8.3l5 5M7.5 8.3l-5 5" stroke="#fff" stroke-width="1.700"/></svg>
<span class="t" style="left:710px;top:511.5px;font-size:13.5px;line-height:16px;color:#7b7b7b;letter-spacing:0.136px;">Engine Performa...</span>
<span class="t" style="left:837px;top:511.5px;font-size:13.5px;line-height:16px;color:#7b7b7b;letter-spacing:0.205px;">Failed</span>
<div class="r" style="left:1188px;top:508px;width:270px;height:21px;overflow:hidden"><span class="t" style="left:3px;top:4px;font-size:13.5px;line-height:16px;color:#7b7b7b;letter-spacing:0.443px">/Execution/Interactive Testing/Interactive session</span></div>
<div class="r" style="left:832px;top:550px;width:626px;height:1px;background:#d2d2d2;"></div>
<div class="r" style="left:705px;top:529px;width:127px;height:22px;background:transparent;border:1px solid #d2d2d2;border-right:none;"></div>
<svg class="r" style="left:685px;top:532px;" width="18" height="18" viewBox="0 0 18 18"><path d="M1.500 5.500v-5h14.500v14.500h-5" fill="none" stroke="#2a6cc4" stroke-width="1"/><path d="M4.500 4.500h5" stroke="#f60" stroke-width="1"/><path d="M11 3.500h3M12.500 3.500v10M11 13.500h3" stroke="#0f3d78" stroke-width="1.100" fill="none"/><rect x="0" y="5.8" width="10" height="10" fill="#d81e05"/><path d="M2.5 8.3l5 5M7.5 8.3l-5 5" stroke="#fff" stroke-width="1.700"/></svg>
<span class="t" style="left:710px;top:532.5px;font-size:13.5px;line-height:16px;color:#7b7b7b;letter-spacing:0.207px;">Date of Manufact...</span>
<span class="t" style="left:837px;top:532.5px;font-size:13.5px;line-height:16px;color:#7b7b7b;letter-spacing:0.205px;">Failed</span>
<div class="r" style="left:1188px;top:529px;width:270px;height:21px;overflow:hidden"><span class="t" style="left:3px;top:4px;font-size:13.5px;line-height:16px;color:#7b7b7b;letter-spacing:0.443px">/Execution/Interactive Testing/Interactive session</span></div>
<div class="r" style="left:832px;top:571px;width:626px;height:1px;background:#d2d2d2;"></div>
<div class="r" style="left:705px;top:550px;width:127px;height:22px;background:transparent;border:1px solid #d2d2d2;border-right:none;"></div>
<svg class="r" style="left:685px;top:553px;" width="18" height="18" viewBox="0 0 18 18"><path d="M1.500 5.500v-5h14.500v14.500h-5" fill="none" stroke="#2a6cc4" stroke-width="1"/><path d="M6 3.500h7" stroke="#f60" stroke-width="1.200"/><path d="M8 4.500h3l-1.500 1.500z" fill="#f60"/><path d="M11.500 9h2M11.500 12h2" stroke="#f60" stroke-width="1.200"/><rect x="0" y="5.8" width="10" height="10" fill="#d81e05"/><path d="M2.5 8.3l5 5M7.5 8.3l-5 5" stroke="#fff" stroke-width="1.700"/></svg>
<span class="t" style="left:710px;top:553.5px;font-size:13.5px;line-height:16px;color:#7b7b7b;letter-spacing:0.114px;">Number of Seats</span>
<span class="t" style="left:837px;top:553.5px;font-size:13.5px;line-height:16px;color:#7b7b7b;letter-spacing:0.205px;">Failed</span>
<span class="t" style="left:1002px;top:553.5px;font-size:13.5px;line-height:16px;color:#7b7b7b;letter-spacing:0.230px;">Comment adde...</span>
<div class="r" style="left:1188px;top:550px;width:270px;height:21px;overflow:hidden"><span class="t" style="left:3px;top:4px;font-size:13.5px;line-height:16px;color:#7b7b7b;letter-spacing:0.443px">/Execution/Interactive Testing/Interactive session</span></div>
<div class="r" style="left:832px;top:592px;width:626px;height:1px;background:#d2d2d2;"></div>
<div class="r" style="left:705px;top:571px;width:127px;height:22px;background:transparent;border:1px solid #d2d2d2;border-right:none;"></div>
<svg class="r" style="left:685px;top:574px;" width="18" height="18" viewBox="0 0 18 18"><path d="M1.500 5.500v-5h14.500v14.500h-5" fill="none" stroke="#2a6cc4" stroke-width="1"/><path d="M6 3.500h7" stroke="#f60" stroke-width="1.200"/><path d="M8 4.500h3l-1.500 1.500z" fill="#f60"/><path d="M11.500 9h2M11.500 12h2" stroke="#f60" stroke-width="1.200"/><rect x="0" y="5.8" width="10" height="10" fill="#d81e05"/><path d="M2.5 8.3l5 5M7.5 8.3l-5 5" stroke="#fff" stroke-width="1.700"/></svg>
<span class="t" style="left:710px;top:574.5px;font-size:13.5px;line-height:16px;color:#7b7b7b;letter-spacing:0.107px;">Fuel Type</span>
<span class="t" style="left:837px;top:574.5px;font-size:13.5px;line-height:16px;color:#7b7b7b;letter-spacing:0.205px;">Failed</span>
<div class="r" style="left:1188px;top:571px;width:270px;height:21px;overflow:hidden"><span class="t" style="left:3px;top:4px;font-size:13.5px;line-height:16px;color:#7b7b7b;letter-spacing:0.443px">/Execution/Interactive Testing/Interactive session</span></div>
<div class="r" style="left:832px;top:613px;width:626px;height:1px;background:#d2d2d2;"></div>
<div class="r" style="left:705px;top:592px;width:127px;height:22px;background:transparent;border:1px solid #d2d2d2;border-right:none;"></div>
<svg class="r" style="left:685px;top:595px;" width="18" height="18" viewBox="0 0 18 18"><path d="M1.500 5.500v-5h14.500v14.500h-5" fill="none" stroke="#2a6cc4" stroke-width="1"/><path d="M4.500 4.500h5" stroke="#f60" stroke-width="1"/><path d="M11 3.500h3M12.500 3.500v10M11 13.500h3" stroke="#0f3d78" stroke-width="1.100" fill="none"/><rect x="0" y="5.8" width="10" height="10" fill="#d81e05"/><path d="M2.5 8.3l5 5M7.5 8.3l-5 5" stroke="#fff" stroke-width="1.700"/></svg>
<span class="t" style="left:710px;top:595.5px;font-size:13.5px;line-height:16px;color:#7b7b7b;letter-spacing:0.031px;">Payload</span>
<span class="t" style="left:837px;top:595.5px;font-size:13.5px;line-height:16px;color:#7b7b7b;letter-spacing:0.205px;">Failed</span>
<div class="r" style="left:1188px;top:592px;width:270px;height:21px;overflow:hidden"><span class="t" style="left:3px;top:4px;font-size:13.5px;line-height:16px;color:#7b7b7b;letter-spacing:0.443px">/Execution/Interactive Testing/Interactive session</span></div>
<div class="r" style="left:832px;top:634px;width:626px;height:1px;background:#d2d2d2;"></div>
<div class="r" style="left:705px;top:613px;width:127px;height:22px;background:transparent;border:1px solid #d2d2d2;border-right:none;"></div>
<svg class="r" style="left:685px;top:616px;" width="18" height="18" viewBox="0 0 18 18"><path d="M1.500 5.500v-5h14.500v14.500h-5" fill="none" stroke="#2a6cc4" stroke-width="1"/><path d="M4.500 4.500h5" stroke="#f60" stroke-width="1"/><path d="M11 3.500h3M12.500 3.500v10M11 13.500h3" stroke="#0f3d78" stroke-width="1.100" fill="none"/><rect x="0" y="5.8" width="10" height="10" fill="#d81e05"/><path d="M2.5 8.3l5 5M7.5 8.3l-5 5" stroke="#fff" stroke-width="1.700"/></svg>
<span class="t" style="left:710px;top:616.5px;font-size:13.5px;line-height:16px;color:#7b7b7b;letter-spacing:0.413px;">Total Weight</span>
<span class="t" style="left:837px;top:616.5px;font-size:13.5px;line-height:16px;color:#7b7b7b;letter-spacing:0.205px;">Failed</span>
<div class="r" style="left:1188px;top:613px;width:270px;height:21px;overflow:hidden"><span class="t" style="left:3px;top:4px;font-size:13.5px;line-height:16px;color:#7b7b7b;letter-spacing:0.443px">/Execution/Interactive Testing/Interactive session</span></div>
<div class="r" style="left:832px;top:655px;width:626px;height:1px;background:#d2d2d2;"></div>
<div class="r" style="left:705px;top:634px;width:127px;height:22px;background:transparent;border:1px solid #d2d2d2;border-right:none;"></div>
<svg class="r" style="left:685px;top:637px;" width="18" height="18" viewBox="0 0 18 18"><path d="M1.500 5.500v-5h14.500v14.500h-5" fill="none" stroke="#2a6cc4" stroke-width="1"/><path d="M4.500 4.500h5" stroke="#f60" stroke-width="1"/><path d="M11 3.500h3M12.500 3.500v10M11 13.500h3" stroke="#0f3d78" stroke-width="1.100" fill="none"/><rect x="0" y="5.8" width="10" height="10" fill="#d81e05"/><path d="M2.5 8.3l5 5M7.5 8.3l-5 5" stroke="#fff" stroke-width="1.700"/></svg>
<span class="t" style="left:710px;top:637.5px;font-size:13.5px;line-height:16px;color:#7b7b7b;letter-spacing:-0.052px;">List Price</span>
<span class="t" style="left:837px;top:637.5px;font-size:13.5px;line-height:16px;color:#7b7b7b;letter-spacing:0.205px;">Failed</span>
<div class="r" style="left:1188px;top:634px;width:270px;height:21px;overflow:hidden"><span class="t" style="left:3px;top:4px;font-size:13.5px;line-height:16px;color:#7b7b7b;letter-spacing:0.443px">/Execution/Interactive Testing/Interactive session</span></div>
<div class="r" style="left:832px;top:676px;width:626px;height:1px;background:#d2d2d2;"></div>
<div class="r" style="left:705px;top:655px;width:127px;height:22px;background:transparent;border:1px solid #d2d2d2;border-right:none;"></div>
<svg class="r" style="left:685px;top:658px;" width="18" height="18" viewBox="0 0 18 18"><path d="M1.500 5.500v-5h14.500v14.500h-5" fill="none" stroke="#2a6cc4" stroke-width="1"/><path d="M4.500 4.500h5" stroke="#f60" stroke-width="1"/><path d="M11 3.500h3M12.500 3.500v10M11 13.500h3" stroke="#0f3d78" stroke-width="1.100" fill="none"/><rect x="0" y="5.8" width="10" height="10" fill="#d81e05"/><path d="M2.5 8.3l5 5M7.5 8.3l-5 5" stroke="#fff" stroke-width="1.700"/></svg>
<span class="t" style="left:710px;top:658.5px;font-size:13.5px;line-height:16px;color:#7b7b7b;letter-spacing:0.036px;">License Plate Nu...</span>
<span class="t" style="left:837px;top:658.5px;font-size:13.5px;line-height:16px;color:#7b7b7b;letter-spacing:0.205px;">Failed</span>
<div class="r" style="left:1188px;top:655px;width:270px;height:21px;overflow:hidden"><span class="t" style="left:3px;top:4px;font-size:13.5px;line-height:16px;color:#7b7b7b;letter-spacing:0.443px">/Execution/Interactive Testing/Interactive session</span></div>
<div class="r" style="left:832px;top:697px;width:626px;height:1px;background:#d2d2d2;"></div>
<div class="r" style="left:705px;top:676px;width:127px;height:22px;background:transparent;border:1px solid #d2d2d2;border-right:none;"></div>
<svg class="r" style="left:685px;top:679px;" width="18" height="18" viewBox="0 0 18 18"><path d="M1.500 5.500v-5h14.500v14.500h-5" fill="none" stroke="#2a6cc4" stroke-width="1"/><path d="M4.500 4.500h5" stroke="#f60" stroke-width="1"/><path d="M11 3.500h3M12.500 3.500v10M11 13.500h3" stroke="#0f3d78" stroke-width="1.100" fill="none"/><rect x="0" y="5.8" width="10" height="10" fill="#d81e05"/><path d="M2.5 8.3l5 5M7.5 8.3l-5 5" stroke="#fff" stroke-width="1.700"/></svg>
<span class="t" style="left:710px;top:679.5px;font-size:13.5px;line-height:16px;color:#7b7b7b;letter-spacing:0.281px;">Annual Mileage</span>
<span class="t" style="left:837px;top:679.5px;font-size:13.5px;line-height:16px;color:#7b7b7b;letter-spacing:0.205px;">Failed</span>
<div class="r" style="left:1188px;top:676px;width:270px;height:21px;overflow:hidden"><span class="t" style="left:3px;top:4px;font-size:13.5px;line-height:16px;color:#7b7b7b;letter-spacing:0.443px">/Execution/Interactive Testing/Interactive session</span></div>
<div class="r" style="left:832px;top:718px;width:626px;height:1px;background:#d2d2d2;"></div>
<div class="r" style="left:705px;top:697px;width:127px;height:22px;background:transparent;border:1px solid #d2d2d2;border-right:none;"></div>
<svg class="r" style="left:685px;top:700px;" width="18" height="18" viewBox="0 0 18 18"><path d="M1.500 5.500v-5h14.500v14.500h-5" fill="none" stroke="#2a6cc4" stroke-width="1"/><path d="M3 3.500h3.500M8 3.500h1.500" stroke="#f60" stroke-width="1.200"/><path d="M14 3c-3 3-3 7 0 10" stroke="#f60" stroke-width="1.100" fill="none"/><rect x="0" y="5.8" width="10" height="10" fill="#d81e05"/><path d="M2.5 8.3l5 5M7.5 8.3l-5 5" stroke="#fff" stroke-width="1.700"/></svg>
<span class="t" style="left:710px;top:700.5px;font-size:13.5px;line-height:16px;color:#7b7b7b;letter-spacing:0.164px;">Next »</span>
<span class="t" style="left:837px;top:700.5px;font-size:13.5px;line-height:16px;color:#7b7b7b;letter-spacing:0.205px;">Failed</span>
<div class="r" style="left:1188px;top:697px;width:270px;height:21px;overflow:hidden"><span class="t" style="left:3px;top:4px;font-size:13.5px;line-height:16px;color:#7b7b7b;letter-spacing:0.443px">/Execution/Interactive Testing/Interactive session</span></div>
<div class="r" style="left:832px;top:739px;width:626px;height:1px;background:#d2d2d2;"></div>
<div class="r" style="left:669px;top:718px;width:163px;height:22px;background:transparent;border:1px solid #d2d2d2;border-right:none;"></div>
<svg class="r" style="left:639px;top:725.5px;" width="5" height="8" viewBox="0 0 5 8"><path d="M0 0l4 3.700-4 3.700z" fill="#757575"/></svg>
<svg class="r" style="left:651px;top:721px;" width="17" height="17" viewBox="0 0 17 17"><rect x=".5" y=".5" width="13" height="14.500" fill="#fff" stroke="#9a9a9a"/><path d="M3 3.500c2 .5 4 3 6.500 6M9.500 3l-5 6.500" stroke="#d81e05" stroke-width="2" fill="none"/><rect x="9" y="9" width="7" height="7" fill="#1e5fae"/><path d="M10.500 12.500h4M12.500 10.500l-2 2 2 2" stroke="#fff" stroke-width="1.100" fill="none"/></svg>
<span class="t" style="left:674px;top:721.5px;font-size:13.5px;line-height:16px;color:#7b7b7b;letter-spacing:-0.344px;">07.02.19 13:44:47</span>
<span class="t" style="left:837px;top:721.5px;font-size:13.5px;line-height:16px;color:#7b7b7b;letter-spacing:0.205px;">Failed</span>
<div class="r" style="left:1188px;top:718px;width:270px;height:21px;overflow:hidden"><span class="t" style="left:3px;top:4px;font-size:13.5px;line-height:16px;color:#7b7b7b;letter-spacing:0.443px">/Execution/Interactive Testing/Interactive session</span></div>
<div class="r" style="left:832px;top:760px;width:626px;height:1px;background:#d2d2d2;"></div>
<div class="r" style="left:669px;top:739px;width:163px;height:22px;background:transparent;border:1px solid #d2d2d2;border-right:none;"></div>
<svg class="r" style="left:639px;top:746.5px;" width="5" height="8" viewBox="0 0 5 8"><path d="M0 0l4 3.700-4 3.700z" fill="#757575"/></svg>
<svg class="r" style="left:651px;top:742px;" width="17" height="17" viewBox="0 0 17 17"><rect x=".5" y=".5" width="13" height="14.500" fill="#fff" stroke="#9a9a9a"/><path d="M3 3.500c2 .5 4 3 6.500 6M9.500 3l-5 6.500" stroke="#d81e05" stroke-width="2" fill="none"/><rect x="9" y="9" width="7" height="7" fill="#1e5fae"/><path d="M10.500 12.500h4M12.500 10.500l-2 2 2 2" stroke="#fff" stroke-width="1.100" fill="none"/></svg>
<span class="t" style="left:674px;top:742.5px;font-size:13.5px;line-height:16px;color:#7b7b7b;letter-spacing:-0.344px;">07.02.19 13:18:09</span>
<span class="t" style="left:837px;top:742.5px;font-size:13.5px;line-height:16px;color:#7b7b7b;letter-spacing:0.205px;">Failed</span>
<div class="r" style="left:1188px;top:739px;width:270px;height:21px;overflow:hidden"><span class="t" style="left:3px;top:4px;font-size:13.5px;line-height:16px;color:#7b7b7b;letter-spacing:0.443px">/Execution/Interactive Testing/Interactive session</span></div>
<div class="r" style="left:832px;top:781px;width:626px;height:1px;background:#d2d2d2;"></div>
<div class="r" style="left:669px;top:760px;width:163px;height:22px;background:transparent;border:1px solid #d2d2d2;border-right:none;"></div>
<svg class="r" style="left:639px;top:767.5px;" width="5" height="8" viewBox="0 0 5 8"><path d="M0 0l4 3.700-4 3.700z" fill="#757575"/></svg>
<svg class="r" style="left:651px;top:763px;" width="17" height="17" viewBox="0 0 17 17"><rect x=".5" y=".5" width="13" height="14.500" fill="#fff" stroke="#9a9a9a"/><path d="M3 3.500c2 .5 4 3 6.500 6M9.500 3l-5 6.500" stroke="#d81e05" stroke-width="2" fill="none"/><rect x="9" y="9" width="7" height="7" fill="#1e5fae"/><path d="M10.500 12.500h4M12.500 10.500l-2 2 2 2" stroke="#fff" stroke-width="1.100" fill="none"/></svg>
<span class="t" style="left:674px;top:763.5px;font-size:13.5px;line-height:16px;color:#7b7b7b;letter-spacing:-0.344px;">07.02.19 13:16:51</span>
<span class="t" style="left:837px;top:763.5px;font-size:13.5px;line-height:16px;color:#7b7b7b;letter-spacing:0.205px;">Failed</span>
<div class="r" style="left:1188px;top:760px;width:270px;height:21px;overflow:hidden"><span class="t" style="left:3px;top:4px;font-size:13.5px;line-height:16px;color:#7b7b7b;letter-spacing:0.443px">/Execution/Interactive Testing/Interactive session</span></div>
<div class="r" style="left:832px;top:802px;width:626px;height:1px;background:#d2d2d2;"></div>
<div class="r" style="left:669px;top:781px;width:163px;height:22px;background:transparent;border:1px solid #d2d2d2;border-right:none;"></div>
<svg class="r" style="left:639px;top:788.5px;" width="5" height="8" viewBox="0 0 5 8"><path d="M0 0l4 3.700-4 3.700z" fill="#757575"/></svg>
<svg class="r" style="left:651px;top:784px;" width="17" height="17" viewBox="0 0 17 17"><rect x=".5" y=".5" width="13" height="14.500" fill="#fff" stroke="#9a9a9a"/><path d="M3 3.500c2 .5 4 3 6.500 6M9.500 3l-5 6.500" stroke="#d81e05" stroke-width="2" fill="none"/><rect x="9" y="9" width="7" height="7" fill="#1e5fae"/><path d="M10.500 12.500h4M12.500 10.500l-2 2 2 2" stroke="#fff" stroke-width="1.100" fill="none"/></svg>
<span class="t" style="left:674px;top:784.5px;font-size:13.5px;line-height:16px;color:#7b7b7b;letter-spacing:-0.344px;">06.02.19 10:52:38</span>
<span class="t" style="left:837px;top:784.5px;font-size:13.5px;line-height:16px;color:#7b7b7b;letter-spacing:0.205px;">Failed</span>
<div class="r" style="left:1188px;top:781px;width:270px;height:21px;overflow:hidden"><span class="t" style="left:3px;top:4px;font-size:13.5px;line-height:16px;color:#7b7b7b;letter-spacing:0.443px">/Execution/Interactive Testing/Interactive session</span></div>
<div class="r" style="left:832px;top:823px;width:626px;height:1px;background:#d2d2d2;"></div>
<div class="r" style="left:669px;top:802px;width:163px;height:22px;background:transparent;border:1px solid #d2d2d2;border-right:none;"></div>
<svg class="r" style="left:639px;top:809.5px;" width="5" height="8" viewBox="0 0 5 8"><path d="M0 0l4 3.700-4 3.700z" fill="#757575"/></svg>
<svg class="r" style="left:651px;top:805px;" width="17" height="17" viewBox="0 0 17 17"><rect x=".5" y=".5" width="13" height="14.500" fill="#fff" stroke="#9a9a9a"/><path d="M3 3.500c2 .5 4 3 6.500 6M9.500 3l-5 6.500" stroke="#d81e05" stroke-width="2" fill="none"/><rect x="9" y="9" width="7" height="7" fill="#1e5fae"/><path d="M10.500 12.500h4M12.500 10.500l-2 2 2 2" stroke="#fff" stroke-width="1.100" fill="none"/></svg>
<span class="t" style="left:674px;top:805.5px;font-size:13.5px;line-height:16px;color:#7b7b7b;letter-spacing:-0.344px;">31.01.19 17:02:47</span>
<span class="t" style="left:837px;top:805.5px;font-size:13.5px;line-height:16px;color:#7b7b7b;letter-spacing:0.205px;">Failed</span>
<div class="r" style="left:1188px;top:802px;width:270px;height:21px;overflow:hidden"><span class="t" style="left:3px;top:4px;font-size:13.5px;line-height:16px;color:#7b7b7b;letter-spacing:0.443px">/Execution/Interactive Testing/Interactive session</span></div>
<div class="r" style="left:1458px;top:382px;width:17px;height:442px;background:#f0f0f0;"></div>
<div class="r" style="left:1458px;top:419px;width:17px;height:197px;background:#c9c9c9;"></div>
<svg class="r" style="left:1461px;top:387px;" width="11" height="8" viewBox="0 0 11 8"><path d="M2 6.300l3.500-3.800 3.500 3.800" fill="none" stroke="#5a5a5a" stroke-width="2"/></svg>
<svg class="r" style="left:1461px;top:812px;" width="11" height="8" viewBox="0 0 11 8"><path d="M2 1.500l3.500 3.800 3.500-3.800" fill="none" stroke="#5a5a5a" stroke-width="2"/></svg>
<div class="r" style="left:613px;top:826px;width:861px;height:15px;background:#f0f0f0;"></div>
<div class="r" style="left:630px;top:826px;width:758px;height:15px;background:#c9c9c9;"></div>
<svg class="r" style="left:617px;top:828px;" width="8" height="11" viewBox="0 0 8 11"><path d="M6 2l-3.800 3.500 3.800 3.500" fill="none" stroke="#5a5a5a" stroke-width="2"/></svg>
<svg class="r" style="left:1461px;top:828px;" width="8" height="11" viewBox="0 0 8 11"><path d="M2 2l3.800 3.500-3.800 3.500" fill="none" stroke="#5a5a5a" stroke-width="2"/></svg>
<svg class="r" style="left:628px;top:854px;" width="17" height="17" viewBox="0 0 17 17"><circle cx="8.500" cy="8.500" r="7.200" fill="#fff" stroke="#2a2a2a" stroke-width="1.500"/><path d="M6.500 7.300h2.300v4.700M6.300 12h4.600" stroke="#2a2a2a" stroke-width="1.500" fill="none"/><circle cx="8.300" cy="4.800" r="1.100" fill="#2a2a2a"/></svg>
<span class="t" style="left:648px;top:855px;font-size:12px;line-height:16px;color:#222;letter-spacing:-0.239px;">Your session has expired.</span>
<span class="t" style="left:896px;top:855px;font-size:13.5px;line-height:16px;color:#222;letter-spacing:0.126px;">From</span>
<span class="t" style="left:1200px;top:855px;font-size:13.5px;line-height:16px;color:#222;letter-spacing:-0.129px;">To</span>
<div class="r" style="left:933px;top:851px;width:254px;height:22px;background:#fff;border:1px solid #ababab;"></div>
<div class="r" style="left:1170px;top:852px;width:1px;height:20px;background:#ababab;"></div>
<div class="r" style="left:1171px;top:852px;width:15px;height:20px;background:#f0f0f0;"></div>
<svg class="r" style="left:1174px;top:859px;" width="10" height="8" viewBox="0 0 10 8"><path d="M1.500 1.500l3.500 3.800 3.500-3.800" fill="none" stroke="#5a5a5a" stroke-width="1.900"/></svg>
<svg class="r" style="left:938px;top:854px;" width="16" height="16" viewBox="0 0 16 16"><circle cx="8" cy="8" r="8" fill="#3a3a3a"/><path d="M8 3.500v5h3.500" stroke="#fff" stroke-width="1.800" fill="none"/></svg>
<span class="t" style="left:957px;top:854.5px;font-size:12px;line-height:16px;color:#222;letter-spacing:-0.206px;">10/17/2018</span>
<div class="r" style="left:1220px;top:851px;width:241px;height:22px;background:#fff;border:1px solid #ababab;"></div>
<div class="r" style="left:1444px;top:852px;width:1px;height:20px;background:#ababab;"></div>
<div class="r" style="left:1445px;top:852px;width:15px;height:20px;background:#f0f0f0;"></div>
<svg class="r" style="left:1448px;top:859px;" width="10" height="8" viewBox="0 0 10 8"><path d="M1.500 1.500l3.500 3.800 3.500-3.800" fill="none" stroke="#5a5a5a" stroke-width="1.900"/></svg>
<svg class="r" style="left:1225px;top:854px;" width="16" height="16" viewBox="0 0 16 16"><circle cx="8" cy="8" r="8" fill="#3a3a3a"/><path d="M8 3.500v5l3 2.500" stroke="#fff" stroke-width="1.800" fill="none"/></svg>
<span class="t" style="left:1244px;top:854.5px;font-size:12px;line-height:16px;color:#222;letter-spacing:-0.206px;">10/31/2018</span>
<div class="r" style="left:612px;top:292px;width:97px;height:41px;background:#e6edf6;border:3px solid #f8a824;box-shadow:2px 2px 4px rgba(0,0,0,.35), inset 2px 2px 3px rgba(60,80,120,.35);"></div>
<span class="t" style="left:624px;top:306px;font-size:12px;line-height:16px;color:#222;letter-spacing:-0.063px;">Assignments</span>
</body></html>
